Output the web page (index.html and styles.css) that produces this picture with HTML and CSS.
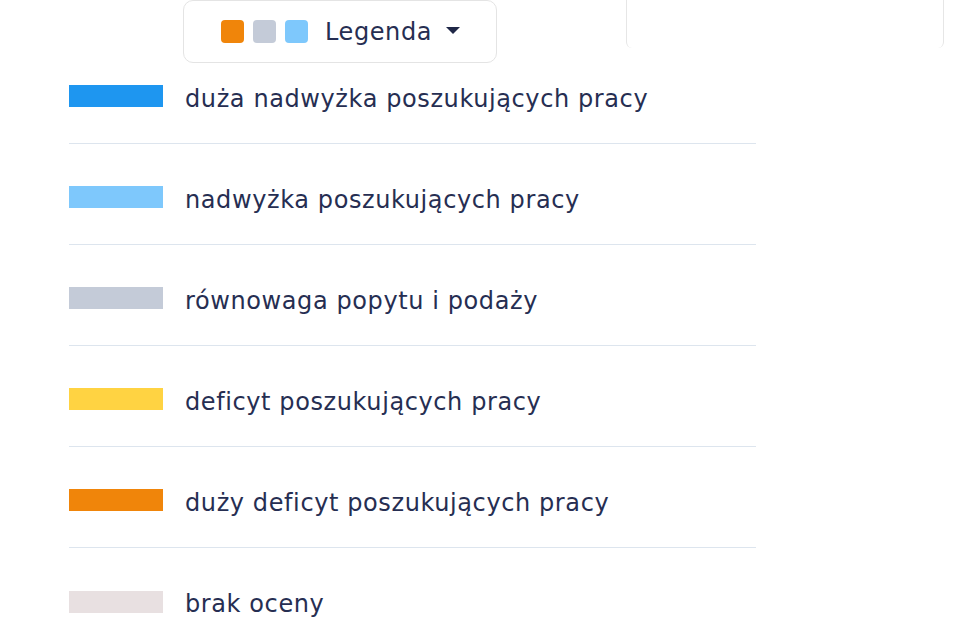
FILE: index.html
```html
<!DOCTYPE html>
<html lang="pl">
<head>
    <meta charset="UTF-8">
    <meta name="viewport" content="width=device-width, initial-scale=1.0">
    <title>Legenda</title>
    <link rel="stylesheet" href="styles.css">
</head>
<body>
    <div class="top">
        <div class="legend-btn">
            <span class="mini orange"></span>
            <span class="mini gray"></span>
            <span class="mini sky"></span>
            <span class="legend-label">Legenda</span>
            <svg class="caret" width="14" height="8" viewBox="0 0 14 8"><path d="M0 0h14L7 7z" fill="#1f2747"/></svg>
        </div>
        <div class="side-card"></div>
    </div>
    <ul class="legend-list">
        <li><span class="swatch blue"></span><span class="name">duża nadwyżka poszukujących pracy</span></li>
        <li><span class="swatch sky"></span><span class="name">nadwyżka poszukujących pracy</span></li>
        <li><span class="swatch gray"></span><span class="name">równowaga popytu i podaży</span></li>
        <li><span class="swatch yellow"></span><span class="name">deficyt poszukujących pracy</span></li>
        <li><span class="swatch orange"></span><span class="name">duży deficyt poszukujących pracy</span></li>
        <li><span class="swatch none"></span><span class="name">brak oceny</span></li>
    </ul>
</body>
</html>
```
FILE: styles.css
```css
*{margin:0;padding:0;box-sizing:border-box;}
body{background:#fff;font-family:"DejaVu Sans","Noto Sans",sans-serif;color:#262e52;letter-spacing:0.6px;width:973px;height:630px;overflow:hidden;}
.top{display:flex;height:63px;}
.legend-btn{margin-left:183px;width:314px;height:63px;border:1px solid #e4e4e4;border-radius:10px;display:flex;align-items:center;padding-left:37px;}
.mini{width:23px;height:23px;border-radius:4px;margin-right:9px;}
.legend-label{font-size:24px;margin-left:8px;margin-right:14px;}
.caret{margin-top:-2px;}
.side-card{margin-left:129px;width:318px;height:48px;border:1px solid #e6e6e6;border-top:none;border-bottom:none;border-radius:0 0 6px 6px;}
.legend-list{list-style:none;margin-left:69px;width:687px;margin-top:-20px;}
.legend-list li{display:flex;align-items:center;height:101px;border-bottom:1px solid #dde5ee;font-size:24px;padding-top:6px;}
.legend-list li:last-child{border-bottom:none;}
.name{padding-top:5px;}
.swatch{width:94px;height:22px;margin-right:22px;flex-shrink:0;}
.blue{background:#1e96f0;}
.sky{background:#7ec8fc;}
.gray{background:#c4cbd8;}
.yellow{background:#ffd342;}
.orange{background:#f0850a;}
.none{background:#e8e0e1;}
```
